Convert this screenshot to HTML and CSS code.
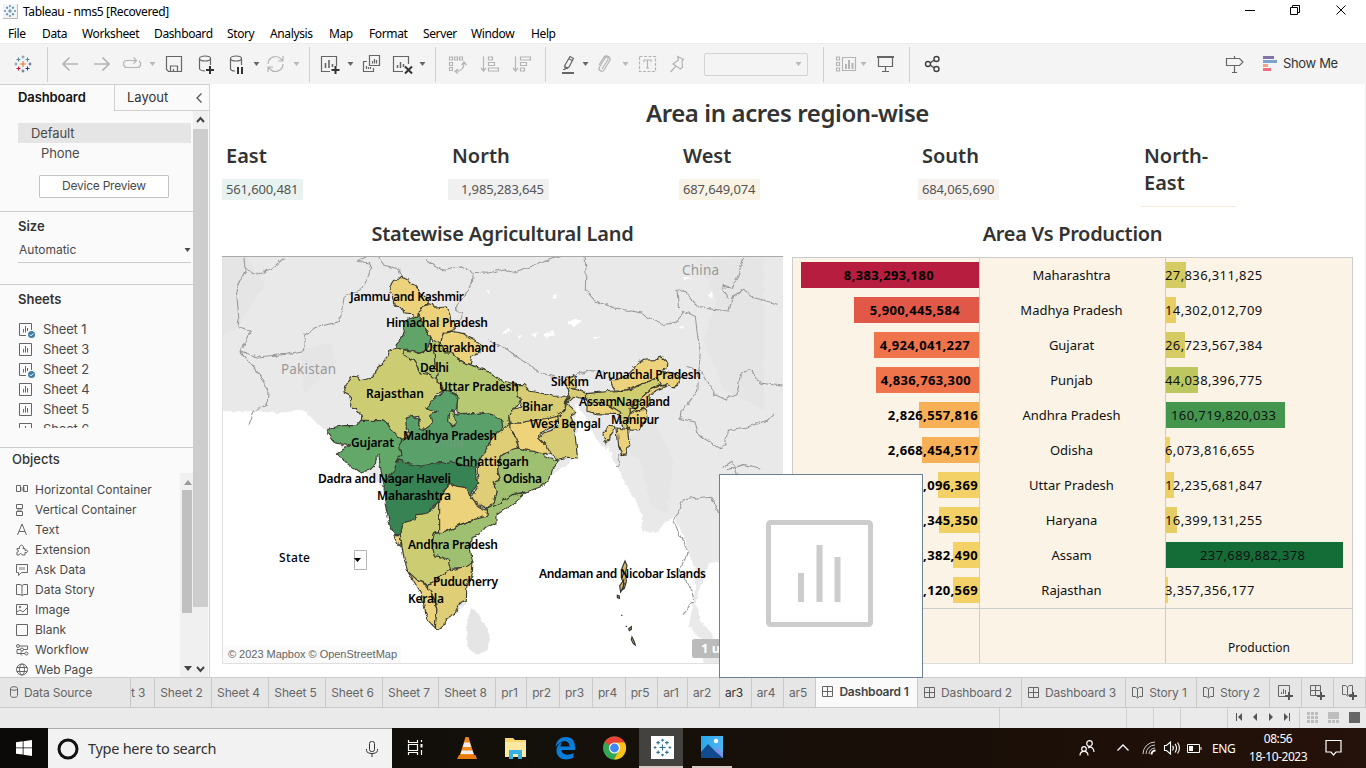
FILE: index.html
```html
<!DOCTYPE html>
<html lang="en">
<head>
<meta charset="utf-8">
<title>Tableau - nms5 [Recovered]</title>
<link rel="stylesheet" href="styles.css">
</head>
<body>
<svg class="defs" width="0" height="0">
  <defs>
    <symbol id="sheet" viewBox="0 0 17 17"><path d="M1.500 2.500h12v12h-12zM5.500 11.500V8M7.500 11.500V5M9.500 11.500V7" fill="none" stroke="#666"/></symbol>
    <symbol id="sheetok" viewBox="0 0 17 17"><path d="M8 14.500H1.500v-12h12V9M5.500 11.500V8M7.500 11.500V5M9.500 10V7" fill="none" stroke="#666"/><circle cx="13.500" cy="13.500" r="3.500" fill="#3a7fa3"/><path d="M11.800 13.500l1.300 1.300 2.200-2.400" fill="none" stroke="#fff"/></symbol>
    <symbol id="grid" viewBox="0 0 12 12"><path d="M.5.5h10v10H.5zM5.500.5v10M.5 5.500h10" fill="none" stroke="#666"/></symbol>
    <symbol id="book" viewBox="0 0 12 12"><path d="M.5.500h3l2 1.500 2-1.500h3v9h-3l-2 1.500-2-1.500h-3zM5.500 2v8" fill="none" stroke="#666"/></symbol>
    <symbol id="caret" viewBox="0 0 7 4"><path d="M.5 0h6L3.500 4z" fill="currentColor"/></symbol>
    <symbol id="plus" viewBox="0 0 8 8"><path d="M4 0v8M0 4h8" stroke="#555" stroke-width="2"/></symbol>
    <symbol id="spark" viewBox="0 0 24 24"><g fill="none" stroke-width="1.100"><path d="M12 9v6M9 12h6" stroke="#e8762d"/><path d="M7.500 5.500v4M5.500 7.500h4M16.500 5.500v4M14.500 7.500h4" stroke="#5b879b"/><path d="M7.500 14.500v4M5.500 16.500h4" stroke="#c72035"/><path d="M16.500 14.500v4M14.500 16.500h4" stroke="#1f457e"/><path d="M12 3.500v3M10.500 5h3M5 10.500v3M3.500 12h3" stroke="#7199a6"/><path d="M12 17.500v3M10.500 19h3M19 10.500v3M17.500 12h3" stroke="#5b6591"/></g></symbol>
    <symbol id="sparkblue" viewBox="0 0 24 24"><g fill="none" stroke="#31739c" stroke-width="1.300"><path d="M12 8.500v7M8.500 12h7M7 4.500v4M5 6.500h4M17 4.500v4M15 6.500h4M7 15.500v4M5 17.500h4M17 15.500v4M15 17.500h4M12 2v3M10.500 3.500h3M3.500 10.500v3M2 12h3M12 19v3M10.500 20.500h3M20.500 10.500v3M19 12h3"/></g></symbol>
  </defs>
</svg>

<div class="app">
  <header class="titlebar">
    <svg class="appicon" width="15" height="15"><rect width="15" height="15" fill="#f3f3f3"/><path d="M14.500 0v14.500H0" fill="none" stroke="#bbb"/><use href="#sparkblue" width="14" height="14"/></svg>
    <span class="wintitle">Tableau - nms5 [Recovered]</span>
    <svg class="winbtns" width="106" height="20"><path d="M0 9.500h10M45.500 6.500h7v7h-7zM47.500 6.500v-2h7v7h-2M91.500 4.500l9 9M100.500 4.500l-9 9" fill="none" stroke="#000"/></svg>
  </header>
  <nav class="menubar">
    <span>File</span><span>Data</span><span>Worksheet</span><span>Dashboard</span><span>Story</span><span>Analysis</span><span>Map</span><span>Format</span><span>Server</span><span>Window</span><span>Help</span>
  </nav>

  <div class="toolbar">
    <svg width="24" height="24"><use href="#spark" width="24" height="24"/></svg>
    <i class="sep"></i>
    <svg class="off" width="24" height="24"><path d="M20 12H5M11.500 5.500L5 12l6.500 6.500" stroke-width="1.700"/></svg>
    <svg class="off" width="24" height="24"><path d="M4 12h15M12.500 5.500L19 12l-6.500 6.500" stroke-width="1.700"/></svg>
    <svg class="off" width="24" height="24"><path d="M9 8.500H7a3.500 3.500 0 0 0 0 7h10a3.500 3.500 0 0 0 2-6.500M7 8.500h9M13.500 5.500l3 3-3 3"/></svg>
    <svg class="caret pale" width="7" height="4"><use href="#caret"/></svg>
    <svg class="on" width="24" height="24"><path d="M4.500 4.500h15v15h-13l-2-2zM8.500 19v-5h7v5M11.500 17v2"/></svg>
    <svg class="on" width="24" height="24"><ellipse cx="11" cy="6.500" rx="5.500" ry="2.500"/><path d="M5.500 6.500v10c0 1.500 3 2.500 5.500 2.500M16.500 6.500V13"/><path d="M16 14v8M12 18h8" stroke="#333" stroke-width="2"/></svg>
    <svg class="on" width="24" height="24"><ellipse cx="12" cy="6.500" rx="5.500" ry="2.500"/><path d="M6.500 6.500v10c0 1.500 2 2.500 4.500 2.500M17.500 6.500V13"/><path d="M14 15v7M18 15v7" stroke="#333" stroke-width="2"/></svg>
    <svg class="caret" width="7" height="4"><use href="#caret"/></svg>
    <svg class="off" width="24" height="24"><path d="M5 12a7.500 7.500 0 0 1 13-5l2 2M20 12a7.500 7.500 0 0 1-13 5l-2-2M20 4v5h-5M5 20v-5h5"/></svg>
    <svg class="caret pale" width="7" height="4"><use href="#caret"/></svg>
    <i class="sep"></i>
    <svg class="on" width="26" height="24"><path d="M13 19.500H4.500v-15h15V14"/><path d="M8.500 11v5M12 8v8M15.500 12v3" stroke-width="1.600"/><path d="M18.500 14v8M14.500 18h8" stroke="#333" stroke-width="2"/></svg>
    <svg class="caret" width="7" height="4"><use href="#caret"/></svg>
    <svg class="on" width="24" height="24"><path d="M10.500 3.500h10v10h-10zM8 9.500H4.500v10h10V16M13.500 9v2.500M15.500 7v4.500M17.500 8v3.500M7.500 14v3M9.500 15v2M11.500 15v2"/></svg>
    <svg class="on" width="24" height="24"><path d="M13 19.500H3.500v-15h15V12"/><path d="M7.500 13v3M10.500 10v6M13.500 12v3" stroke-width="1.500"/><path d="M15 14.500l7 7M22 14.500l-7 7" stroke="#333" stroke-width="2"/></svg>
    <svg class="caret" width="7" height="4"><use href="#caret"/></svg>
    <i class="sep"></i>
    <svg class="off" width="24" height="24"><path d="M4.500 5h3v3h-3zM9.500 5h3v3h-3zM14.500 5h3v3h-3zM4.500 10.500h3v3h-3zM4.500 15.500h3v3h-3zM19 11c0 5-3 8-8 8.500M13 17l-3 2.500 3 2M16.500 13l2.500-3 2.500 3"/></svg>
    <svg class="off" width="24" height="24"><path d="M5.500 4.500v14M3 16l2.500 3 2.500-3M10.500 5h4v3h-4zM10.500 10.500h6v3h-6zM10.500 16h10v3h-10z"/></svg>
    <svg class="off" width="24" height="24"><path d="M5.500 4.500v14M3 16l2.500 3 2.500-3M10.500 5h10v3h-10zM10.500 10.500h6v3h-6zM10.500 16h4v3h-4z"/></svg>
    <i class="sep"></i>
    <svg class="on" width="24" height="24"><path d="M9 13l5-8.500 3.500 2L13 15l-4 2zM12.500 6.500l3.500 2M8 14l4 2.500M7 17.500h2"/><path d="M6 21h12" stroke-width="2"/></svg>
    <svg class="caret" width="7" height="4"><use href="#caret"/></svg>
    <svg class="off" width="24" height="24"><path d="M9 17l6-9.500a1.500 1.500 0 0 0-3-1.500l-5.500 9a2.500 2.500 0 0 0 4.500 3l6-10a3.500 3.500 0 0 0-6-3l-5 8"/></svg>
    <svg class="caret pale" width="7" height="4"><use href="#caret"/></svg>
    <svg class="off" width="24" height="24"><rect x="4.500" y="4.500" width="16" height="15" stroke-dasharray="3 1.500"/><path d="M9 10V8h7v2M12.500 8v8M11 16h3"/></svg>
    <svg class="off" width="24" height="24"><path d="M12.500 4.500l6 3-1.500 1.500.5 6-2 2-7.500-5 2-1.500 3.500-2.500zM11 14l-5.500 6"/></svg>
    <div class="combo"><svg class="pale" width="7" height="4"><use href="#caret"/></svg></div>
    <i class="sep"></i>
    <svg class="off" width="26" height="24"><path d="M2.500 5h3v3h-3zM2.500 10.500h3v3h-3zM2.500 16h3v3h-3zM8.500 5.500h13v13h-13z"/><path d="M12 12v5M15 8v9M18.500 11v6" stroke-width="2"/></svg>
    <svg class="caret pale" width="7" height="4"><use href="#caret"/></svg>
    <svg class="on" width="24" height="24"><path d="M4 5h17" stroke-width="2"/><path d="M5.500 6v8.500h14V6M12.500 15v5M9 19.500h7"/></svg>
    <i class="sep"></i>
    <svg class="on dark" width="24" height="24"><circle cx="8" cy="12" r="2.500"/><circle cx="16.500" cy="7" r="2.500"/><circle cx="16.500" cy="17" r="2.500"/><path d="M10.500 10.800l3.500-2.500M10.500 13.200l3.500 2.500"/></svg>
    <svg class="on" width="24" height="24"><path d="M4.500 6.500h13l3.500 3.500-3.500 3.500h-13zM12.500 4v2.500M12.500 14v7M10 20.500h5"/></svg>
    <svg width="16" height="16"><path d="M0 0h11v3H0z" fill="#8074a8"/><path d="M0 4h14v3H0z" fill="#7aa3d0"/><path d="M0 8h5v3H0z" fill="#f4a582"/><path d="M0 12h8v3H0z" fill="#f46d7f"/></svg>
    <span class="showme">Show Me</span>
  </div>

  <main class="work">
    <aside class="side">
      <div class="sidetabs"><b>Dashboard</b><span class="layout">Layout<svg width="8" height="12"><path d="M6.500 1.500L2 6l4.500 4.500" fill="none" stroke="#555" stroke-width="1.300"/></svg></span></div>
      <div class="sidebody">
        <div class="panels">
          <section class="devices">
            <div class="dev sel">Default</div>
            <div class="dev phone">Phone</div>
            <div class="preview">Device Preview</div>
          </section>
          <section class="size">
            <h4>Size</h4>
            <div class="drop">Automatic<svg width="7" height="4"><use href="#caret"/></svg></div>
          </section>
          <section class="sheets">
            <h4>Sheets</h4>
            <ul>
              <li><svg width="17" height="17"><use href="#sheetok"/></svg>Sheet 1</li>
              <li><svg width="17" height="17"><use href="#sheet"/></svg>Sheet 3</li>
              <li><svg width="17" height="17"><use href="#sheetok"/></svg>Sheet 2</li>
              <li><svg width="17" height="17"><use href="#sheet"/></svg>Sheet 4</li>
              <li><svg width="17" height="17"><use href="#sheet"/></svg>Sheet 5</li>
              <li><svg width="17" height="17"><use href="#sheet"/></svg>Sheet 6</li>
            </ul>
          </section>
          <section class="objects">
            <div class="objcol">
              <h4>Objects</h4>
              <ul>
                <li><svg width="13" height="13"><path d="M4 4h5v4H4z" fill="#bbb" stroke="none"/><path d="M.5 2.500h4v6h-4zM7.500 2.500h4v6h-4z"/></svg>Horizontal Container</li>
                <li><svg width="13" height="13"><path d="M1 5h5v4H1z" fill="#bbb" stroke="none"/><path d="M.5 1.500h6v4h-6zM.5 8.500h6v4h-6z"/></svg>Vertical Container</li>
                <li><svg width="13" height="13"><path d="M1.500 12L6 1l4.500 11M3 8.500h6"/></svg>Text</li>
                <li><svg width="13" height="13"><path d="M1 5.500h2.500c-1-3 3-5 4-1.500l-.5 1.500h2v2c3.500-1.500 3.500 3 0 2v2.500H6c-.5-2-2.500-2-3 0H1V9c2 .5 2-2.500 0-2z"/></svg>Extension</li>
                <li><svg width="13" height="13"><path d="M.5 1.500h11v8h-6l-3 3v-3h-2z"/><path d="M3 4h6v3H3z" fill="#bbb" stroke="none"/></svg>Ask Data</li>
                <li><svg width="13" height="13"><path d="M.5 1.500h3.500l2 1 2-1h3.500v10H8l-2 1-2-1H.5zM6 3v9"/></svg>Data Story</li>
                <li><svg width="13" height="13"><path d="M.5 1.500h11v10H.5zM1 9l3-2 3 2 4-4"/><circle cx="4" cy="4" r=".8"/></svg>Image</li>
                <li><svg width="13" height="13"><path d="M.5 1.500h11v11H.5z"/></svg>Blank</li>
                <li><svg width="13" height="13"><circle cx="2" cy="3" r="1.500"/><circle cx="6" cy="6.500" r="1.500"/><circle cx="10.500" cy="10.500" r="1.500"/><path d="M3.500 3h8v3.500H7.500M4.500 6.500H1v4h6M9 10.500H4l2-2M4 10.500l2 2"/></svg>Workflow</li>
                <li><svg width="13" height="13"><circle cx="6" cy="6.500" r="5.500"/><ellipse cx="6" cy="6.500" rx="2.500" ry="5.500"/><path d="M1 4.500h10M1 8.500h10"/></svg>Web Page</li>
              </ul>
            </div>
            <div class="objscroll"><svg width="8" height="5"><path d="M4 0l4 5H0z" fill="#999"/></svg><i></i><svg width="8" height="5"><path d="M4 5l4-5H0z" fill="#444"/></svg></div>
          </section>
        </div>
        <div class="sidescroll">
          <svg width="16" height="18"><path d="M4 11l3.500-4 3.500 4" fill="none" stroke="#444" stroke-width="2"/></svg>
          <i></i>
          <svg width="16" height="18"><path d="M4 7l3.500 4L11 7" fill="none" stroke="#444" stroke-width="2"/></svg>
        </div>
      </div>
    </aside>

    <div class="dash">
      <h1>Area in acres region-wise</h1>
      <div class="kpis">
        <div><h3>East</h3><p class="east">561,600,481</p></div>
        <div><h3>North</h3><p class="north">1,985,283,645</p></div>
        <div><h3>West</h3><p class="west">687,649,074</p></div>
        <div><h3>South</h3><p class="south">684,065,690</p></div>
        <div><h3>North-<br>East</h3><i class="hair"></i></div>
      </div>
      <div class="cols">
        <section class="mapcol">
          <h2>Statewise Agricultural Land</h2>
          <svg class="map" width="562" height="408" viewBox="222 256 562 408">
            <defs><filter id="rough" x="0" y="0" width="1" height="1" color-interpolation-filters="sRGB"><feTurbulence type="fractalNoise" baseFrequency=".16" numOctaves="2" seed="4"/><feDisplacementMap in="SourceGraphic" scale="5" xChannelSelector="R" yChannelSelector="G"/></filter></defs>
            <rect x="222" y="256" width="562" height="408" fill="#fff"/>
            <g filter="url(#rough)">
              <rect x="222" y="256" width="562" height="408" fill="#fff"/>
              <g transform="translate(320.300 256.300) scale(.33333)">
                <path fill="#e9e9e9" d="M-310-10H1400V1010L1280 1000 1210 920 1165 918 1150 960 1125 1040 1140 1090 1170 1130 1200 1180 1230 1230H1150L1145 1150 1105 1110 1120 1030 1130 950 1110 900 1085 830 1060 780 1035 800 1005 830 965 825 965 780 950 740 920 690 895 640 875 600 865 570 845 595 775 600 600 720 440 860 440 1040 350 1110 250 900 185 690 100 620 30 530 0 512-20 490-50 462-130 470-190 465-310 465Z"/>
                <path fill="#e5e5e5" d="M1130 10l60 120-40 120 60 150 120 60V0zM900 560l60 60 30 130 50 20 20-160-60-120zM-294 0h70l60 80-90 140-40 20zM-60 280l90-20 20 60-100 90z"/>
                <path fill="#e5e5e5" d="M448 1058L470 1066 500 1115 512 1150 500 1185 465 1195 442 1170 438 1120Z"/>
                <path fill="#fff" d="M545 225l25-8 3 10-25 6zM590 238l14-6-2 16zM670 235l25-14 10 16-12-3-12 12zM635 232l20-6-12 18zM740 200l28-12 14 8-20 16zM815 245l28-10-15 16zM695 120l15-8-3 16zM1070 215l25-3-6 8zM498 100l12 4-4 10zM740 440l14 30 12 60 25 60-15-5-16-60zM765 440l35 50 30 60 25 30 10 20-90 5zM1165 120l10-20 4 30zM1090 60l20 8-18 4z"/>
                <g fill="none" stroke="#999" stroke-width="3.200">
                  <path d="M-230 0l5 42-27 58 8 90-3 20 38 12-31 62 50 18 90-8 50-12 2-45 30-22 76-20 14-75 50-20 32-60-10-20-30-5 40-20 10-45-10-25M-228 38l45 17 40-20 35-30M175 0l20 28 40 10 10 28M315 8l48 35 54-14 42 20-3 32-28 40-20 30 2 15 18 6-6 18-12 6M458 48l44 3 46-13 32 10 60-20 60-22 30-8M-242 285l60 70 25 50-2 40-40 20-15 40M505 255l50 20 40 30 60 40 40 15 30 12M745 365l25-10 40-12 40 5M794 0l3 40-2 60 30 35 60 20 80 15 30 20 35 15 40-8 20-32 35 15 5 45 10 60-8 120-15 15-35 45-3 22 45 10 12 40 65 40 15-15 5-40 60-10 60-20 20-20M1075 155l-5-50 25-6 10 25 30 30 90 10 15-45 30-20 30 25 75 20M1100 330l45 20 40 65 30 15 35-15 10-60 30-15 30 40 70 10M1270 5l-15 50-20 40-30-5 20 40M1220 640l50-15 50 10M1205 635l30-20 25 60-20 50-40 55-30-60-80 10-30 60 15 40 30 60-30 50 40 60 5 35-35 40M895 590l3 30-10 15"/>
                </g>
                <g stroke="#3c3d31" stroke-width="3.400" stroke-linejoin="round">
                  <path fill="#edd27c" d="M208 90L220 72 232 72 240 60 262 68 268 80 285 88 302 112 325 130 322 145 300 152 295 178 285 182 270 172 254 170 250 160 222 148 216 120ZM300 155L320 142 340 145 345 155 375 152 385 165 390 185 402 195 405 215 400 222 375 228 365 238 362 258 348 262 330 240 322 225 305 205 297 180ZM362 258L368 232 395 225 430 232 445 243 460 250 485 268 478 290 455 298 450 325 430 318 402 300 398 290 375 290Z"/>
                  <path fill="#60a567" d="M275 185L297 178 305 205 322 225 332 245 325 270 312 285 295 292 275 285 262 278 242 282 226 275 228 262 245 245 252 225 250 205 262 190Z"/>
                  <path fill="#b7c972" d="M250 280L275 285 295 292 312 285 330 262 345 262 342 290 345 340 355 345 352 370 325 352 305 360 290 330 278 312 252 298Z"/>
                  <path fill="#cccd73" d="M226 275L250 280 252 298 278 312 290 330 300 350 330 355 352 370 360 385 375 402 350 412 345 430 320 455 350 465 335 480 340 500 325 515 290 522 300 500 295 480 262 485 260 510 270 535 245 553 215 525 185 500 122 492 125 480 108 460 92 452 90 420 72 410 70 398 85 375 98 360 115 362 122 370 155 362 180 325 205 300 210 282Z"/>
                  <path fill="#b8c974" d="M330 262L345 250 362 262 375 290 398 290 402 300 430 318 450 325 500 345 540 372 590 385 600 408 590 420 605 430 590 450 572 465 565 490 570 500 555 520 545 520 545 495 515 475 480 470 430 475 410 465 410 415 375 402 350 375 355 345 345 340 342 290Z"/>
                  <path fill="#5aa06a" d="M375 402L395 408 415 418 410 445 400 470 430 475 480 470 515 475 545 492 548 522 525 530 500 575 485 602 470 630 430 628 395 618 340 620 305 630 255 620 230 612 240 590 225 570 245 553 270 535 258 515 256 488 275 480 295 488 295 515 310 520 335 500 330 480 350 465 320 455 330 440Z"/>
                  <path fill="#b8c974" d="M395 460L402 470 400 485 408 500 398 510 385 495 388 475Z"/>
                  <path fill="#64a869" d="M122 492L185 493 200 500 215 525 245 553 235 570 242 595 228 612 235 625 225 650 210 672 188 668 180 630 175 590 168 600 165 625 150 640 118 648 85 625 48 590 90 568 45 560 22 530 28 515 75 508 108 508Z"/>
                  <path fill="#388354" d="M190 675L225 640 235 610 255 620 305 630 340 620 395 618 430 628 465 630 467 665 478 680 460 700 448 725 440 695 388 685 375 700 358 735 330 755 325 770 290 778 285 790 245 800 240 835 225 838 210 810 195 745Z"/>
                  <path fill="#cccd73" d="M240 835L245 800 285 790 290 775 325 770 355 735 358 780 355 828 340 832 335 850 342 898 365 902 385 915 395 940 350 970 325 985 295 975 262 945 250 900Z"/>
                  <path fill="#edd27c" d="M220 835H240L242 868 232 862ZM388 685L440 695 450 725 462 730 465 740 490 758 502 762 500 785 460 790 420 805 375 828 355 828 355 735 375 700ZM262 945L295 975 315 985 335 1010 350 1060 348 1080 345 1115 325 1095 315 1065 305 1020Z"/>
                  <path fill="#9fc071" d="M340 832L375 828 420 805 460 790 500 780 502 760 545 735 575 715 615 708 590 735 530 775 530 800 490 815 478 835 452 845 450 880 458 920 440 932 400 935 392 945 385 915 365 902 342 898 335 850Z"/>
                  <path fill="#e0ce77" d="M548 522L570 500 570 520 590 555 595 575 555 590 540 600 532 640 540 670 518 678 528 705 520 735 500 758 478 745 460 732 455 722 475 685 470 640 475 615 500 575 525 530ZM458 920L455 960 440 980 438 1035 420 1040 405 1070 378 1085 378 1100 355 1118 345 1115 350 1060 340 1020 325 1000 325 985 350 970 375 950 395 940 440 930Z"/>
                  <path fill="#9fc071" d="M575 580L595 575 620 582 640 585 660 590 690 605 715 615 695 640 690 665 665 690 625 705 590 712 575 715 545 738 500 758 520 735 528 705 518 678 540 670 532 640 540 600Z"/>
                  <path fill="#efd37b" d="M570 500H600L640 490 690 485 712 470 715 490 700 510 660 530 655 545 680 570 695 590 660 592 640 585 620 582 595 575 590 550 568 515Z"/>
                  <path fill="#d8cd75" d="M590 385H610L630 405 660 410 700 420 750 420 740 435 735 455 720 478 690 485 640 492 600 500 570 498 565 480 572 465 600 455 605 430 590 420ZM738 395L770 400 800 412V430L760 420 740 440 768 468 750 478 758 500 765 540 772 608 740 606 715 612 690 592 680 570 655 545 670 530 700 520 715 505 712 470 735 462 735 440 748 420Z"/>
                  <path fill="#cfcd70" d="M798 412L870 405 930 400 960 385 1010 365 1020 385 990 400 960 430 930 455V500L920 520 900 505 900 470 880 455 860 445 800 440Z"/>
                  <path fill="#edd27c" d="M735 365L760 355 765 375 768 395 738 398ZM800 440L840 438 880 455 905 470 895 475 830 472 800 465ZM865 370L890 370 920 355 945 330 970 312 1000 310 1025 302 1040 315 1038 335 1022 345 1060 350 1080 365 1062 395 1045 385 1020 388 1010 365 960 385 920 400 880 402 875 385ZM990 400L1020 388 1040 390 1005 405 990 415 985 450 960 460 930 475V455ZM930 470L945 460 975 460 980 480 960 520 930 522 920 500ZM890 515L925 520 928 550 918 595 905 598 895 570ZM848 530L870 510 885 515 870 535 868 555 855 560Z"/>
                </g>
              </g>
            </g>
            <g transform="translate(320 256) scale(.33333)" fill="#d9bb62" stroke="#333" stroke-width="3.500"><path d="M915 915l-9 22 5 14-6 18 8 14-8 20 8-6 6-20-2-30 4-18zM911 972l-12 18 3 18 8-14zM892 1018l6 2v7l-6-2zM904 1077l3 2M917 1110l4 2M926 1118l8-6v8l-6 4zM936 1143l6 12 4 12-6-4-6-12z"/></g>
            <g class="country"><text x="281" y="374" textLength="55">Pakistan</text><text x="682" y="275" textLength="37">China</text><text x="432" y="447" textLength="32" opacity=".3">India</text></g>
            <g class="states">
              <text x="350" y="301" textLength="114">Jammu and Kashmir</text><text x="386" y="327" textLength="102">Himachal Pradesh</text><text x="424" y="352" textLength="72">Uttarakhand</text><text x="420" y="372" textLength="29">Delhi</text><text x="439" y="391" textLength="80">Uttar Pradesh</text><text x="366" y="398" textLength="58">Rajasthan</text><text x="522" y="411" textLength="31">Bihar</text><text x="530" y="428" textLength="71">West Bengal</text><text x="551" y="386" textLength="38">Sikkim</text><text x="595" y="379" textLength="106">Arunachal Pradesh</text><text x="579" y="406" textLength="38">Assam</text><text x="616" y="406" textLength="54">Nagaland</text><text x="611" y="424" textLength="48">Manipur</text><text x="403" y="440" textLength="94">Madhya Pradesh</text><text x="351" y="447" textLength="43">Gujarat</text><text x="455" y="466" textLength="74">Chhattisgarh</text><text x="503" y="483" textLength="39">Odisha</text><text x="318" y="483" textLength="133">Dadra and Nagar Haveli</text><text x="377" y="500" textLength="74">Maharashtra</text><text x="408" y="549" textLength="90">Andhra Pradesh</text><text x="433" y="586" textLength="65">Puducherry</text><text x="408" y="603" textLength="36">Kerala</text><text x="539" y="578" textLength="167">Andaman and Nicobar Islands</text>
              <text class="plain" x="279" y="562" textLength="31">State</text>
            </g>
            <path d="M354.500 550.500h12v19h-12z" fill="#fff" stroke="#b5b5b5"/><path d="M354 558h7l-3.500 4z"/>
            <rect x="222" y="645" width="179" height="18" fill="#fafafa"/>
            <text class="attr" x="228" y="658" textLength="169">© 2023 Mapbox © OpenStreetMap</text>
            <rect x="692" y="639" width="70" height="19" rx="2.500" fill="#bbb"/><text class="pill" x="701" y="653">1 unknown</text>
            <path d="M222 256.500h561" stroke="#aaa"/><path d="M222.500 257v406.500h561" fill="none" stroke="#e0e0e0"/><path d="M783.500 256v407" stroke="#fff"/>
          </svg>
        </section>
        <section class="chartcol">
          <h2>Area Vs Production</h2>
          <div class="chart">
            <div class="row"><div class="area"><i style="width:178px;background:#b71d3e"></i><b class="mid">8,383,293,180</b></div><span>Maharashtra</span><div class="prod"><i style="width:20px;background:#d4cb63"></i><em>27,836,311,825</em></div></div>
            <div class="row"><div class="area"><i style="width:125px;background:#e15848"></i><b style="margin-right:19px">5,900,445,584</b></div><span>Madhya Pradesh</span><div class="prod"><i style="width:10px;background:#e8ce64"></i><em>14,302,012,709</em></div></div>
            <div class="row"><div class="area"><i style="width:105px;background:#f0744b"></i><b style="margin-right:9px">4,924,041,227</b></div><span>Gujarat</span><div class="prod"><i style="width:19px;background:#d6cb63"></i><em>26,723,567,384</em></div></div>
            <div class="row"><div class="area"><i style="width:103px;background:#f0744b"></i><b style="margin-right:8px">4,836,763,300</b></div><span>Punjab</span><div class="prod"><i style="width:32px;background:#bdc75f"></i><em>44,038,396,775</em></div></div>
            <div class="row"><div class="area"><i style="width:60px;background:#f8b056"></i><b>2,826,557,816</b></div><span>Andhra Pradesh</span><div class="prod"><i style="width:119px;background:#44964f"></i><em style="margin-left:5px">160,719,820,033</em></div></div>
            <div class="row"><div class="area"><i style="width:57px;background:#f8b056"></i><b>2,668,454,517</b></div><span>Odisha</span><div class="prod"><i style="width:4px;background:#f1d16a"></i><em>6,073,816,655</em></div></div>
            <div class="row"><div class="area"><i style="width:41px;background:#f4d166"></i><b>2,096,369</b></div><span>Uttar Pradesh</span><div class="prod"><i style="width:8px;background:#ead066"></i><em>12,235,681,847</em></div></div>
            <div class="row"><div class="area"><i style="width:40px;background:#f4d166"></i><b>1,345,350</b></div><span>Haryana</span><div class="prod"><i style="width:11px;background:#e4cd64"></i><em>16,399,131,255</em></div></div>
            <div class="row"><div class="area"><i style="width:26px;background:#f4d166"></i><b>1,382,490</b></div><span>Assam</span><div class="prod"><i style="width:177px;background:#146c36"></i><em style="margin-left:34px">237,689,882,378</em></div></div>
            <div class="row"><div class="area"><i style="width:26px;background:#f4d166"></i><b>1,120,569</b></div><span>Rajasthan</span><div class="prod"><i style="width:2px;background:#f1d16a"></i><em>3,357,356,177</em></div></div>
            <div class="row foot"><div></div><div></div><div class="axis">Production</div></div>
          </div>
        </section>
      </div>
    </div>
    <div class="ghost"><svg width="202" height="202"><rect x="48.500" y="47.500" width="102" height="102" rx="2" fill="none" stroke="#ccc" stroke-width="5"/><path d="M81 98v29M99.500 70v57M117.500 82v45" stroke="#ccc" stroke-width="6"/></svg></div>
  </main>

  <div class="tabs">
    <span class="ds"><svg width="10" height="13"><ellipse cx="5" cy="2.500" rx="3.500" ry="1.800"/><path d="M1.500 2.500v7c0 2.500 7 2.500 7 0v-7"/></svg>Data Source</span><span class="cut">t 3</span><span>Sheet 2</span><span>Sheet 4</span><span>Sheet 5</span><span>Sheet 6</span><span>Sheet 7</span><span>Sheet 8</span><span>pr1</span><span>pr2</span><span>pr3</span><span>pr4</span><span>pr5</span><span>ar1</span><span>ar2</span><span class="hot">ar3</span><span>ar4</span><span>ar5</span>
    <span class="cur"><svg width="12" height="12"><use href="#grid"/></svg>Dashboard 1</span><span><svg width="12" height="12"><use href="#grid"/></svg>Dashboard 2</span><span><svg width="12" height="12"><use href="#grid"/></svg>Dashboard 3</span><span><svg width="12" height="12"><use href="#book"/></svg>Story 1</span><span><svg width="12" height="12"><use href="#book"/></svg>Story 2</span>
    <span class="add"><svg width="17" height="16"><path d="M8 11.500H1.500v-11h11V7M4.500 9V7M6.500 9V4M8.500 9V5"/><use href="#plus" x="8" y="7" width="8" height="8"/></svg></span><span class="add"><svg width="17" height="16"><use href="#grid" x="1" y="0" width="12" height="12"/><use href="#plus" x="8" y="7" width="8" height="8"/></svg></span><span class="add"><svg width="17" height="16"><use href="#book" x="1" y="0" width="12" height="12"/><use href="#plus" x="8" y="7" width="8" height="8"/></svg></span>
  </div>
  <div class="status">
    <i></i><i></i><i></i><i></i><i></i>
    <svg class="nav" width="71" height="20"><path d="M8 5h1v8H8zM14 5v8l-4-4zM29 5v8l-4-4zM41 5v8l4-4zM56 5v8l4-4zM61 5h1v8h-1z" fill="#555"/></svg>
    <svg class="views" width="66" height="20"><path d="M7 4h3v3H7zm4 0h3v3h-3zm4 0h3v3h-3zM7 8h3v3H7zm4 0h3v3h-3zm4 0h3v3h-3zM7 12h3v3H7zm4 0h3v3h-3zm4 0h3v3h-3zM28 4h11v7H28zm0 8h3v3h-3zm4 0h3v3h-3zm4 0h3v3h-3z" fill="#bdbdbd"/><path d="M49 4h11v11H49z" fill="#666"/></svg>
  </div>

  <footer class="taskbar">
    <div class="start"><svg width="16" height="16" fill="#fff"><path d="M0 2.200L6.700 1.300V7.500H0zM7.500 1.200L16 0v7.500H7.500zM0 8.300h6.700v6.300L0 13.700zM7.500 8.300H16V16l-8.500-1.200z"/></svg></div>
    <div class="search"><svg width="22" height="22"><circle cx="11" cy="11" r="9" fill="none" stroke="#111" stroke-width="3"/></svg><span>Type here to search</span><svg width="14" height="18" fill="none" stroke="#333"><rect x="4.500" y="1.500" width="5" height="10" rx="2"/><path d="M1.500 9v1.500c0 4 11 4 11 0V9M7 14v3"/></svg></div>
    <svg class="tb" width="49" height="40" fill="none" stroke="#fff" stroke-width="1.200"><path d="M16.500 12v2.500h9V12M16.500 16.500h9v6h-9zM16.500 27v-2.500h9V27M29.500 12v2M29.500 22v5"/><path d="M29.500 16v3.500" stroke-width="2"/></svg>
    <svg class="tb" width="50" height="40"><path d="M24.500 9h3L34 30H18z" fill="#f08a1d"/><path d="M23.300 14.500h5.400l1.500 4.500h-8.300zM20.700 22.500h10.800l1.200 3.500H19.500z" fill="#eee"/><path d="M18 27h16.500l1.500 4H16z" fill="#e87b0b"/></svg>
    <svg class="tb" width="50" height="40"><path d="M14 10h8l2 2h11v17H14z" fill="#f7d774"/><path d="M14 14h21v15H14z" fill="#ffe9a0"/><path d="M18 31v-9h13v9h-4v-5h-5v5z" fill="#35b0e6"/></svg>
    <svg class="tb" width="49" height="40"><path d="M14.500 19c1-7 5-10 10.500-10 6 0 9 4 9 10v3H20.500c0 5 7 6 12 3v4.500c-7 4-17 2-17-7 0-4 2.500-7 5.500-8.500-.8 1-1.300 2.500-1.500 4.500h9c0-7-9-7-14 .5z" fill="#0a7ddb"/></svg>
    <svg class="tb" width="49" height="40"><circle cx="24.500" cy="20" r="11.500" fill="#34a853"/><path d="M24.500 20L14.500 14.200A11.500 11.500 0 0 1 34.500 14.200z" fill="#ea4335"/><path d="M26 14.500h8.700A11.500 11.500 0 0 1 24 31.500l5-9z" fill="#fbc116"/><circle cx="24.500" cy="20" r="5.500" fill="#fff"/><circle cx="24.500" cy="20" r="4.400" fill="#4285f4"/></svg>
    <div class="tb live"><svg width="23" height="23"><rect width="23" height="23" fill="#fff"/><use href="#sparkblue" x="1" y="1" width="21" height="21"/></svg></div>
    <div class="tb photo"><svg width="22" height="22"><defs><linearGradient id="sky" x2="1" y2=".3"><stop stop-color="#27a8ea"/><stop offset="1" stop-color="#4fb4f2"/></linearGradient></defs><path d="M0 0h22v22H0z" fill="url(#sky)"/><path d="M11 16l5-5 6 6v5H11z" fill="#7a93e8"/><path d="M0 16l7-8 8 8 7 6H0z" fill="#124a8e"/><circle cx="15" cy="5" r="2.200" fill="#fff"/></svg></div>
    <div class="tray">
      <svg width="17" height="18" fill="none" stroke="#fff" stroke-width="1.200"><circle cx="10.500" cy="4.500" r="2.800"/><circle cx="5" cy="10" r="2.300"/><path d="M1 16.500c0-5.500 8-5.500 8 0M9 9c3-2 6 0 6 4"/></svg>
      <svg width="14" height="12" fill="none" stroke="#fff" stroke-width="1.300"><path d="M1.500 8.500L7 3l5.500 5.500"/></svg>
      <svg width="14" height="14" fill="none" stroke="#ccc"><path d="M1 13A12 12 0 0 1 13 1M4 13a9 9 0 0 1 9-9M7 13a6 6 0 0 1 6-6" /><path d="M9.500 13.500a4 4 0 0 1 4-4" stroke="#fff" stroke-width="2"/></svg>
      <svg width="17" height="16" fill="none" stroke="#fff" stroke-width="1.100"><path d="M1.500 5.500h2l4-3.500v12l-4-3.500h-2zM9.500 6c1 1 1 3 0 4.500M12 4c2 2 2 6 0 8.500M14.500 2.500c2.500 3 2.500 8 0 11"/></svg>
      <svg width="16" height="11" fill="none" stroke="#fff"><path d="M1.500 1.500h12v8h-12zM15 4v3"/><path d="M3 3h4v5H3z" fill="#fff" stroke="none"/></svg>
      <span class="eng">ENG</span>
      <span class="clock">08:56<br>18-10-2023</span>
      <svg width="17" height="18" fill="none" stroke="#fff" stroke-width="1.200"><path d="M1 1.500h15V13h-5l-2.500 3L6 13H1z"/></svg>
    </div>
  </footer>
</div>
</body>
</html>
```
FILE: styles.css
```css
* { box-sizing: border-box; }
body { margin: 0; font-family: "Open Sans", "Noto Sans", sans-serif; color: #333; background: #fff; }
h1, h2, h3, h4, p, ul { margin: 0; padding: 0; }
ul { list-style: none; }
svg { display: block; flex: none; }
.defs { position: absolute; }
.app { width: 1366px; height: 768px; overflow: hidden; display: flex; flex-direction: column; }

.titlebar { height: 22px; display: flex; align-items: center; padding-left: 3px; flex: none; }
.appicon { margin-top: 1px; }
.wintitle { margin-left: 5px; font: 12px "Noto Sans", sans-serif; color: #000; flex: 1; letter-spacing: -.35px; padding-top: 1px; }
.winbtns { margin-right: 15px; }
.menubar { height: 21px; flex: none; display: grid; grid-template-columns: 34px 40px 72px 73px 43px 59px 40px 54px 48px 60px auto; padding: 2px 0 0 8px; font: 12px/20px "Noto Sans", sans-serif; color: #000; letter-spacing: -.38px; }

.toolbar { height: 41px; flex: none; background: #f4f4f4; border-top: 1px solid #ececec; padding-left: 11px; display: grid; align-items: center; grid-template-columns: 36px 11px 32px 30px 29px 13px 32px 30px 29px 10px 30px 16px 8px 30px 12px 31px 29px 16px 10px 33px 32px 35px 11px 26px 11px 29px 13px 30px 39px 119px 11px 26px 13px 36px 11px 302px 41px 20px auto; }
.toolbar svg { fill: none; }
.sep { width: 1px; height: 35px; background: #d0d0d0; }
.on { stroke: #666; stroke-width: 1.2; }
.dark { stroke: #444; stroke-width: 1.4; }
.off { stroke: #b4b4b4; stroke-width: 1.2; }
.caret { color: #666; }
.pale { color: #b8b8b8; }
.combo { width: 104px; height: 23px; border: 1px solid #d3d3d3; border-radius: 2px; display: flex; align-items: center; justify-content: flex-end; padding-right: 5px; }
.showme { font: 13px Inter, sans-serif; letter-spacing: -.35px; color: #333; padding-bottom: 2px; }

.work { height: 593px; flex: none; display: flex; position: relative; }
.side { width: 210px; background: #fafafa; border-right: 1px solid #d4d4d4; border-top: 1px solid #d0d0d0; display: flex; flex-direction: column; font-family: Inter, sans-serif; font-size: 13px; color: #4a4a4a; }
.sidetabs { display: flex; height: 26px; line-height: 25px; flex: none; }
.sidetabs b { width: 114px; padding-left: 18px; color: #111; font-weight: 600; letter-spacing: -.1px; }
.layout { flex: 1; border-left: 1px solid #d0d0d0; border-bottom: 1px solid #d0d0d0; padding: 0 6px 0 12px; display: flex; align-items: center; justify-content: space-between; color: #333; }
.sidebody { flex: 1; display: flex; min-height: 0; }
.panels { width: 193px; }
.side h4 { font-size: 13px; font-weight: 600; color: #333; }
.devices { height: 101px; padding: 12px 2px 0 18px; border-bottom: 1px solid #ccc; }
.dev { height: 20px; line-height: 20px; padding-left: 13px; letter-spacing: -.1px; }
.sel { background: #e5e5e5; }
.phone { padding-left: 23px; }
.preview { width: 130px; height: 23px; margin: 12px 0 0 21px; border: 1px solid #c4c4c4; border-radius: 1px; text-align: center; line-height: 20px; font-size: 12px; letter-spacing: -.25px; background: #fff; }
.size { height: 73px; padding: 5px 2px 0 18px; border-bottom: 1px solid #ccc; line-height: 18px; }
.drop { display: flex; justify-content: space-between; align-items: center; height: 27px; border-bottom: 1px solid #ccc; font-size: 12px; padding: 2px 0 0 1px; margin-top: 1px; }
.sheets { height: 143px; overflow: hidden; padding: 5px 0 0 18px; line-height: 18px; }
.sheets ul { margin-top: 11px; height: 109px; overflow: hidden; }
.sheets li { display: flex; align-items: center; height: 20px; gap: 8px; font-size: 13px; letter-spacing: -.15px; }
.objects { margin-top: 19px; border-top: 1px solid #ccc; height: 230px; display: flex; overflow: hidden; }
.objcol { width: 180px; padding: 3px 0 0 12px; }
.objects h4 { font-weight: 500; line-height: 17px; }
.objects ul { margin-top: 11px; padding-left: 4px; }
.objects li { display: flex; align-items: center; height: 20px; gap: 6px; font-size: 12px; white-space: nowrap; }
.objects li svg { fill: none; stroke: #666; }
.objscroll { width: 13px; margin-top: 25px; background: #f0f0f0; padding: 7px 0 6px 2px; display: flex; flex-direction: column; }
.objscroll svg { margin-left: 2px; }
.objscroll i { width: 10px; height: 123px; background: #c0c0c0; margin: 5px 0 53px; flex: none; }
.sidescroll { width: 15px; background: #f0f0f0; display: flex; flex-direction: column; }
.sidescroll i { height: 478px; background: #cdcdcd; margin-bottom: 53px; flex: none; }

.dash { flex: 1; padding-left: 12px; border-right: 1px solid #eee; color: #333; font-family: "Noto Sans", sans-serif; }
.dash h1 { width: 1131px; text-align: center; font-size: 24px; line-height: 32px; font-weight: 600; letter-spacing: -.4px; padding-top: 13px; height: 57px; }
.kpis { display: grid; grid-template-columns: 226px 231px 239px 222px auto; height: 79px; }
.kpis h3 { font-size: 20px; font-weight: 600; line-height: 27px; padding: 1px 0 0 4px; }
.kpis p { margin-top: 10px; height: 21px; line-height: 20px; padding: 0 4px; font-size: 13px; width: 81px; color: #555; letter-spacing: -.15px; white-space: nowrap; }
.east { background: #e8f2f0; }
.kpis .north { width: 101px; padding-left: 13px; background: #f0f0f0; }
.west { background: #f9f3e6; }
.south { background: #f7f1ee; }
.hair { display: block; width: 97px; height: 1px; background: #faecdc; margin-top: 10px; }
.cols { display: grid; grid-template-columns: 570px 561px; }
.cols h2 { height: 36px; line-height: 28px; text-align: center; font-size: 20px; font-weight: 600; letter-spacing: -.2px; }
.mapcol h2 { width: 561px; }
.chartcol h2 { letter-spacing: -.3px; }
.country { font: 13.5px "Noto Sans", sans-serif; fill: #999; }
.states { font: 600 12px "Noto Sans", sans-serif; fill: #000; }
.plain { font-weight: 500; }
.attr { font: 11px "Liberation Sans", sans-serif; fill: #666; }
.pill { font: 700 13px "Noto Sans", sans-serif; fill: #fff; }
.chart { margin-top: 1px; height: 407px; background: #faf3e6; border: 1px solid #ccc; border-bottom-color: #ddd; }
.row { display: grid; grid-template-columns: 187px 186px 1fr; height: 35px; align-items: center; font-size: 13px; color: #111; }
.row > span { text-align: center; margin: -2px 3px 0 0; }
.row > div { height: 35px; display: grid; align-items: center; }
.row > div > * { grid-area: 1 / 1; }
.row > .area, .foot > div:first-child { border-right: 1px solid #ccc; }
.row > .area i { justify-self: end; height: 26px; margin-top: -2px; }
.row > .area b { justify-self: end; margin: -2px 1px 0 0; font-size: 13px; letter-spacing: .36px; color: #000; }
.row > .area .mid { margin-right: 45px; }
.row > .prod, .foot > .axis { border-left: 1px solid #ccc; margin-left: -1px; }
.row > .prod i { height: 26px; justify-self: start; margin-top: -2px; }
.row > .prod em { font-style: normal; justify-self: start; letter-spacing: .38px; margin: -2px 0 0 -1px; }
.row.foot { height: 55px; border-top: 1px solid #ccc; }
.row.foot > div { height: 54px; }
.axis { text-align: center; padding-top: 22px; font-size: 12px; }
.ghost { position: absolute; left: 719px; top: 390px; width: 204px; height: 204px; background: #fff; border: 1px solid #6d7f92; z-index: 2; }

.tabs { height: 31px; flex: none; background: #e6e6e6; border-top: 1px solid #ccc; border-bottom: 1px solid #c9c9c9; display: grid; grid-template-columns: 131px 24px 57px 57px 57px 57px 56px 57px 31px 33px 33px 33px 32px 30px 32px 32px 32px 32px 102px 104px 104px 71px 73px 32px 32px 32px; font: 12px Inter, sans-serif; color: #666; }
.tabs span { border-right: 1px solid #c9c9c9; display: flex; align-items: center; justify-content: center; gap: 5px; white-space: nowrap; overflow: hidden; padding-right: 3px; letter-spacing: -.15px; }
.tabs svg { fill: none; stroke: #666; }
.tabs .ds { justify-content: flex-start; padding-left: 9px; }
.tabs .cut { justify-content: flex-start; }
.tabs .cur { background: #fafafa; font-weight: 600; color: #444; letter-spacing: -.2px; padding: 0 2px 2px 0; }
.tabs .hot { color: #333; }
.tabs .add { padding-right: 0; }
.status { height: 20px; flex: none; background: #eaeaea; display: grid; grid-template-columns: 1000px 127px 27px 27px 47px 72px 66px; }
.status i, .nav { border-right: 1px solid #d0d0d0; }
.nav { width: 72px; }

.taskbar { height: 40px; flex: none; background: linear-gradient(90deg, #0b0a08, #14100a 40%, #1b0f08 75%, #25120a); display: flex; color: #fff; font-family: "Open Sans", sans-serif; }
.start { width: 48px; display: flex; align-items: center; padding-left: 16px; }
.search { width: 344px; background: #f2f2f2; border-top: 1px solid #aaa; display: flex; align-items: center; padding: 0 13px 0 9px; color: #333; font: 14.500px "Noto Sans", sans-serif; letter-spacing: -.28px; }
.search span { flex: 1; margin: -2px 0 0 9px; }
.tb { flex: none; }
.live { width: 44px; background: #44423f; border-bottom: 2px solid #d8c8c4; display: flex; align-items: center; justify-content: center; padding-left: 2px; }
.photo { width: 40px; margin-left: 9px; border-bottom: 2px solid #d8c8c4; display: flex; align-items: center; justify-content: center; }
.tray { margin-left: auto; display: flex; align-items: center; font: 12px "Noto Sans", sans-serif; padding-right: 24px; }
.tray svg:nth-child(2) { margin-left: 20px; }
.tray svg:nth-child(3) { margin-left: 12px; }
.tray svg:nth-child(4) { margin-left: 7px; }
.tray svg:nth-child(5) { margin-left: 6px; }
.eng { margin-left: 10px; width: 25px; letter-spacing: -.4px; }
.clock { width: 58px; margin: 0 18px 0 12px; text-align: center; line-height: 18px; white-space: nowrap; letter-spacing: -.45px; }
```
